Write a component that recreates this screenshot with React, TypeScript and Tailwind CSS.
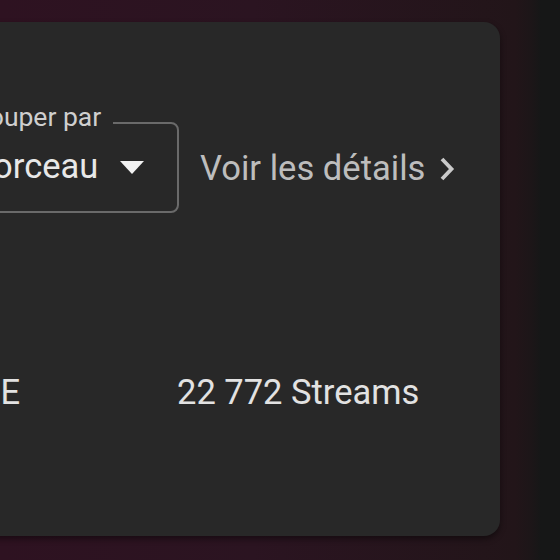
import React from "react";

export default function App() {
  return (
    <div
      className="w-[560px] h-[560px] overflow-hidden flex flex-col bg-[linear-gradient(to_right,#2e1221_0%,#2b1421_45%,#221519_92%,#1c1618_95%,#161717_96.6%,#161717_100%)]"
      style={{ fontFamily: "Roboto, 'Liberation Sans', sans-serif" }}
    >
      <div className="mt-[22px] ml-[-300px] w-[800px] h-[514px] shrink-0 rounded-[16px] bg-[#282828] shadow-[0_3px_6px_rgba(0,0,0,0.45)] pl-[233px] pt-[100px] flex flex-col">
        <div className="flex items-center">
          <div className="relative w-[246px] h-[91px] rounded-[8px] border-2 border-[#6a6a6a] flex items-center pl-[28px] pr-[33px] pb-[4px]">
            <span className="absolute left-[21px] top-[-20px] pl-[6px] pr-[12px] bg-[#282828] text-[26.5px] leading-none text-[#cfcfcf] whitespace-nowrap">
              Grouper par
            </span>
            <span className="flex-1 text-[34.5px] leading-[40px] text-[#e8e8e8]">Morceau</span>
            <svg width="24" height="13" viewBox="0 0 24 13" className="mt-[4px]">
              <path d="M0 0 L24 0 L12 13 Z" fill="#f2f2f2" />
            </svg>
          </div>
          <div className="ml-[21px] flex items-center text-[34.6px] leading-[40px] text-[#bdbdbd]">
            <span>Voir les détails</span>
            <svg width="16" height="24" viewBox="0 0 16 24" className="ml-[14px] mt-[2px]">
              <path d="M3 2 L12.5 12 L3 22" fill="none" stroke="#cacaca" strokeWidth="3.8" strokeLinejoin="miter" />
            </svg>
          </div>
        </div>
        <div className="mt-[159px] flex items-center text-[34.5px] leading-[40px] text-[#e2e2e2] whitespace-nowrap">
          <div className="w-[87px] flex justify-end">
            <span>TITRE LIBRE</span>
          </div>
          <span className="ml-[157px]">22&nbsp;772 Streams</span>
        </div>
      </div>
    </div>
  );
}
